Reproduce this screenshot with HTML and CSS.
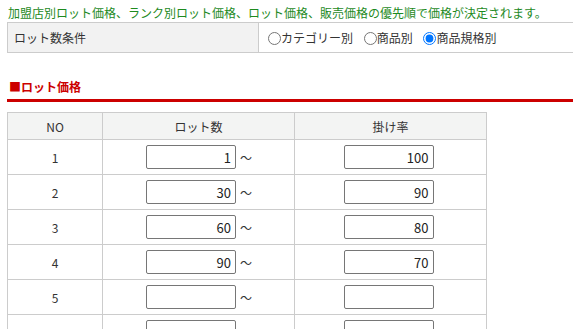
FILE: index.html
```html
<!DOCTYPE html>
<html lang="ja">
<head>
<meta charset="utf-8">
<link rel="stylesheet" href="styles.css">
</head>
<body>
<div class="page">
  <p class="note">加盟店別ロット価格、ランク別ロット価格、ロット価格、販売価格の優先順で価格が決定されます。</p>
  <table class="cond">
    <tr>
      <th>ロット数条件</th>
      <td>
        <label class="opt"><input type="radio" name="lot">カテゴリー別</label>
        <label class="opt"><input type="radio" name="lot">商品別</label>
        <label class="opt"><input type="radio" name="lot" checked>商品規格別</label>
      </td>
    </tr>
  </table>
  <h2 class="heading">■ロット価格</h2>
  <table class="lots">
    <thead>
      <tr><th class="c-no">NO</th><th class="c-lot">ロット数</th><th class="c-rate">掛け率</th></tr>
    </thead>
    <tbody>
      <tr><td>1</td><td class="lot"><input class="num" value="1"><span class="tilde">～</span></td><td class="rate"><input class="num" value="100"></td></tr>
      <tr><td>2</td><td class="lot"><input class="num" value="30"><span class="tilde">～</span></td><td class="rate"><input class="num" value="90"></td></tr>
      <tr><td>3</td><td class="lot"><input class="num" value="60"><span class="tilde">～</span></td><td class="rate"><input class="num" value="80"></td></tr>
      <tr><td>4</td><td class="lot"><input class="num" value="90"><span class="tilde">～</span></td><td class="rate"><input class="num" value="70"></td></tr>
      <tr><td>5</td><td class="lot"><input class="num" value=""><span class="tilde">～</span></td><td class="rate"><input class="num" value=""></td></tr>
      <tr><td>6</td><td class="lot"><input class="num" value=""><span class="tilde">～</span></td><td class="rate"><input class="num" value=""></td></tr>
    </tbody>
  </table>
</div>
</body>
</html>
```
FILE: styles.css
```css
html, body {
  margin: 0;
  padding: 0;
  overflow: hidden;
  background: #fff;
}
body {
  font-family: "Noto Sans CJK JP", "Noto Sans", sans-serif;
  font-size: 12px;
  color: #333;
}
.page {
  width: 640px;
  padding: 4px 0 0 7px;
}
.note {
  margin: 0 0 0 1px;
  line-height: 18px;
  color: #1e8a1e;
}
.cond {
  width: 100%;
  border-collapse: collapse;
  margin-top: 0;
}
.cond th, .cond td {
  border: 1px solid #ccc;
  height: 29px;
  padding: 0 6px;
  font-weight: normal;
  text-align: left;
}
.cond th {
  width: 238px;
  background: #f2f2f2;
}
.cond td {
  padding-left: 6px;
}
.opt {
  margin-right: 5px;
}
.opt input {
  margin: 0 0 0 3px;
  vertical-align: -2px;
}
.heading {
  margin: 22px 0 0;
  padding: 3px 0 3px 2px;
  font-size: 12px;
  line-height: 18px;
  font-weight: bold;
  color: #cc0000;
  border-bottom: 3px solid #cc0000;
}
.lots {
  margin-top: 10px;
  border-collapse: collapse;
  width: 480px;
}
.lots th, .lots td {
  border: 1px solid #ccc;
  text-align: center;
  padding: 0;
}
.lots th {
  height: 26px;
  background: #f3f4f3;
  font-weight: normal;
}
.lots td {
  height: 34px;
}
.lots td.lot {
  padding-left: 2px;
}
.lots td.rate {
  padding-right: 4px;
}
.c-no { width: 94px; }
.c-lot { width: 191px; }
.num {
  box-sizing: border-box;
  width: 90px;
  height: 24px;
  border: 1px solid #767676;
  border-radius: 2px;
  padding: 0 4px;
  text-align: right;
  font-family: "Noto Sans CJK JP", "Noto Sans", sans-serif;
  font-size: 13px;
  color: #222;
  vertical-align: middle;
}
.tilde {
  display: inline-block;
  width: 13px;
  margin-left: 4px;
  text-align: left;
  vertical-align: middle;
}
```
